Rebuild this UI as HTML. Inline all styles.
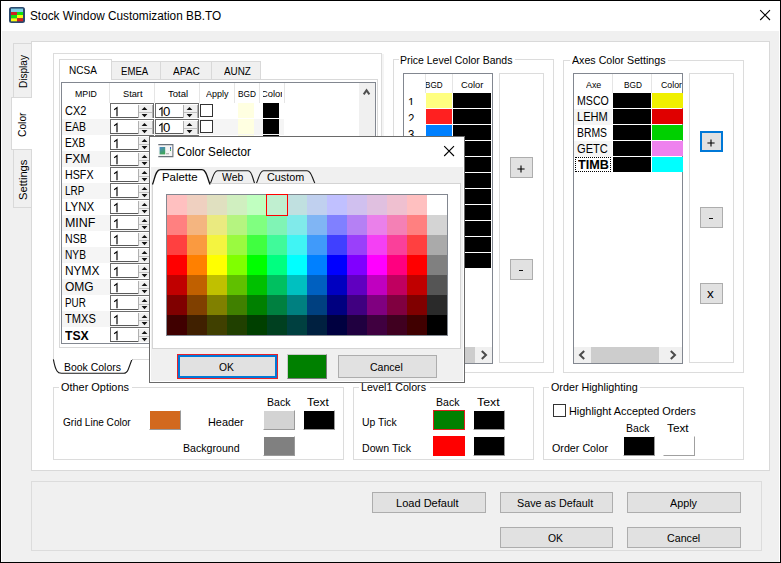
<!DOCTYPE html>
<html><head><meta charset="utf-8"><title>Stock Window Customization BB.TO</title>
<style>
html,body{margin:0;padding:0;}
body{width:781px;height:563px;overflow:hidden;background:#f0f0f0;font-family:"Liberation Sans", sans-serif;position:relative;}
#root{position:absolute;left:0;top:0;width:781px;height:563px;overflow:hidden;background:#f0f0f0;}
#root div{position:absolute;box-sizing:border-box;}
#root svg{position:absolute;overflow:visible;}
.t{position:absolute;white-space:nowrap;line-height:1;transform-origin:0 0;display:block;}
.btn{background:#e1e1e1;border:1px solid #adadad;}
.sw{border:1px solid;border-color:#fff #9a9a9a #9a9a9a #fff;}
</style></head>
<body><div id="root">
<div style="left:0px;top:0px;width:781px;height:563px;background:#f0f0f0;border:1px solid #000;"></div>
<div style="left:1px;top:1px;width:779px;height:30px;background:#fff;"></div>
<div style="left:1px;top:31px;width:1px;height:531px;background:#fff;"></div>
<div style="left:779px;top:31px;width:1px;height:531px;background:#fff;"></div>
<svg style="left:9px;top:7px" width="16" height="16" viewBox="0 0 16 16">
<rect x="0" y="0" width="16" height="16" rx="2.5" fill="#2c4a6e"/>
<rect x="2" y="1.6" width="12" height="3.4" fill="#7fcde6"/>
<rect x="2" y="5" width="6" height="3" fill="#d02020"/><rect x="8" y="5" width="6" height="3" fill="#10e010"/>
<rect x="2" y="8" width="6" height="3.3" fill="#10e010"/><rect x="8" y="8" width="6" height="3.3" fill="#f8f810"/>
<rect x="2" y="11.3" width="6" height="3" fill="#f8f810"/><rect x="8" y="11.3" width="6" height="3" fill="#d02020"/>
</svg>
<span class="t" style="left:29.91px;top:10px;font-size:12px;color:#000;transform:scaleX(0.9829);">Stock Window Customization BB.TO</span>
<svg style="left:760px;top:10px" width="11" height="11" viewBox="0 0 11 11"><path d="M0.2 0.2 L10 10 M10 0.2 L0.2 10" stroke="#000" stroke-width="1.1" fill="none"/></svg>
<div style="left:31px;top:41px;width:739px;height:430px;background:#fff;border:1px solid #d9d9d9;"></div>
<div style="left:13px;top:43px;width:19px;height:55px;background:#f0f0f0;border:1px solid #d9d9d9;"></div>
<div style="left:13px;top:149px;width:19px;height:59px;background:#f0f0f0;border:1px solid #d9d9d9;"></div>
<div style="left:11px;top:97px;width:21px;height:53px;background:#fff;border:1px solid #d9d9d9;border-right:none;"></div>
<span class="t" style="left:18px;top:87.9px;font-size:11px;transform-origin:0 0;transform:rotate(-90deg) scaleX(0.9143);">Display</span>
<span class="t" style="left:17px;top:136.5px;font-size:11px;transform-origin:0 0;transform:rotate(-90deg) scaleX(0.9320);">Color</span>
<span class="t" style="left:18px;top:199.8px;font-size:11px;transform-origin:0 0;transform:rotate(-90deg) scaleX(1.0168);">Settings</span>
<div style="left:53px;top:53px;width:329px;height:307px;border:1px solid #dcdcdc;"></div>
<div style="left:382px;top:54px;width:2px;height:306px;background:#f4f4f4;"></div>
<div style="left:111px;top:61px;width:150px;height:19px;background:#f0f0f0;border:1px solid #d9d9d9;"></div>
<div style="left:160px;top:61px;width:1px;height:19px;background:#d9d9d9;"></div>
<div style="left:211px;top:61px;width:1px;height:19px;background:#d9d9d9;"></div>
<div style="left:59px;top:79px;width:319px;height:269px;border:1px solid #d9d9d9;background:#fff;"></div>
<div style="left:59px;top:59px;width:53px;height:21px;background:#fff;border:1px solid #d9d9d9;border-bottom:none;"></div>
<span class="t" style="left:69.39px;top:65px;font-size:11px;color:#000;transform:scaleX(0.9119);">NCSA</span>
<span class="t" style="left:120.83px;top:66px;font-size:11px;color:#000;transform:scaleX(0.8733);">EMEA</span>
<span class="t" style="left:172.70px;top:66px;font-size:11px;color:#000;transform:scaleX(0.9217);">APAC</span>
<span class="t" style="left:223.50px;top:66px;font-size:11px;color:#000;transform:scaleX(0.8975);">AUNZ</span>
<div style="left:61px;top:82px;width:315px;height:262px;border:1px solid #828790;background:#fff;"></div>
<div style="left:109px;top:83px;width:1px;height:20px;background:#e5e5e5;"></div>
<div style="left:154px;top:83px;width:1px;height:20px;background:#e5e5e5;"></div>
<div style="left:199px;top:83px;width:1px;height:20px;background:#e5e5e5;"></div>
<div style="left:234px;top:83px;width:1px;height:20px;background:#e5e5e5;"></div>
<div style="left:259px;top:83px;width:1px;height:20px;background:#e5e5e5;"></div>
<div style="left:284px;top:83px;width:1px;height:20px;background:#e5e5e5;"></div>
<span class="t" style="left:74.62px;top:90px;font-size:9px;color:#000;transform:scaleX(0.9741);">MPID</span>
<span class="t" style="left:122.59px;top:90px;font-size:9px;color:#000;transform:scaleX(1.0270);">Start</span>
<span class="t" style="left:167.59px;top:90px;font-size:9px;color:#000;transform:scaleX(1.0575);">Total</span>
<span class="t" style="left:205.90px;top:90px;font-size:9px;color:#000;transform:scaleX(0.9956);">Apply</span>
<span class="t" style="left:238.41px;top:90px;font-size:9px;color:#000;transform:scaleX(0.9205);">BGD</span>
<div style="left:263px;top:85px;width:19px;height:16px;overflow:hidden;"><span class="t" style="left:-1.6px;top:5px;font-size:9px;transform:scaleX(1.0411)">Color</span></div>
<div style="left:359px;top:83px;width:16px;height:260px;background:#f0f0f0;"></div>
<svg style="left:362px;top:87px" width="10" height="10" viewBox="0 0 10 10"><path d="M1.7 7.3 L4.55 3.3 L7.4 7.3" stroke="#505050" stroke-width="2" fill="none"/></svg>
<span class="t" style="left:65.14px;top:105px;font-size:12px;color:#000;transform:scaleX(0.9124);">CX2</span>
<div style="left:110px;top:103px;width:44px;height:15px;background:#fff;border:1px solid #6d6d6d;border-bottom:none;"></div>
<div style="left:110px;top:117px;width:28px;height:1px;background:#5a5a5a;"></div>
<div style="left:138px;top:105px;width:15px;height:13px;background:#f0f0f0;border-left:1px solid #b0b0b0;border-right:1px solid #b0b0b0;"></div>
<div style="left:139px;top:112px;width:13px;height:1px;background:#c0c0c0;"></div>
<svg style="left:141px;top:106px" width="7" height="12" viewBox="0 0 7 12"><path d="M0.6 4.1 L3.5 0.9 L6.4 4.1 Z M0.6 8 L6.4 8 L3.5 11.2 Z" fill="#111"/></svg>
<svg style="left:113.6px;top:106.8px" width="5" height="10" viewBox="0 0 5 10"><path d="M0.2 2.7 L3 0.6 L3 9.2" stroke="#000" stroke-width="1.15" fill="none"/></svg>
<div style="left:155px;top:103px;width:44px;height:15px;background:#fff;border:1px solid #6d6d6d;border-bottom:none;"></div>
<div style="left:155px;top:117px;width:28px;height:1px;background:#5a5a5a;"></div>
<div style="left:183px;top:105px;width:15px;height:13px;background:#f0f0f0;border-left:1px solid #b0b0b0;border-right:1px solid #b0b0b0;"></div>
<div style="left:184px;top:112px;width:13px;height:1px;background:#c0c0c0;"></div>
<svg style="left:186px;top:106px" width="7" height="12" viewBox="0 0 7 12"><path d="M0.6 4.1 L3.5 0.9 L6.4 4.1 Z M0.6 8 L6.4 8 L3.5 11.2 Z" fill="#111"/></svg>
<svg style="left:158.6px;top:106.8px" width="5" height="10" viewBox="0 0 5 10"><path d="M0.2 2.7 L3 0.6 L3 9.2" stroke="#000" stroke-width="1.15" fill="none"/></svg>
<span class="t" style="left:163.25px;top:106px;font-size:12px;color:#000;transform:scaleX(1.0957);">0</span>
<div style="left:200px;top:104px;width:13px;height:13px;background:#fff;border:1px solid #333;"></div>
<div style="left:238px;top:103px;width:16px;height:15px;background:#ffffe1;"></div>
<div style="left:263px;top:103px;width:16px;height:15px;background:#000;"></div>
<div style="left:62px;top:119px;width:222px;height:16px;background:#f5f5f5;"></div>
<span class="t" style="left:64.73px;top:121px;font-size:12px;color:#000;transform:scaleX(0.8711);">EAB</span>
<div style="left:110px;top:119px;width:44px;height:15px;background:#fff;border:1px solid #6d6d6d;border-bottom:none;"></div>
<div style="left:110px;top:133px;width:28px;height:1px;background:#5a5a5a;"></div>
<div style="left:138px;top:121px;width:15px;height:13px;background:#f0f0f0;border-left:1px solid #b0b0b0;border-right:1px solid #b0b0b0;"></div>
<div style="left:139px;top:128px;width:13px;height:1px;background:#c0c0c0;"></div>
<svg style="left:141px;top:122px" width="7" height="12" viewBox="0 0 7 12"><path d="M0.6 4.1 L3.5 0.9 L6.4 4.1 Z M0.6 8 L6.4 8 L3.5 11.2 Z" fill="#111"/></svg>
<svg style="left:113.6px;top:122.8px" width="5" height="10" viewBox="0 0 5 10"><path d="M0.2 2.7 L3 0.6 L3 9.2" stroke="#000" stroke-width="1.15" fill="none"/></svg>
<div style="left:155px;top:119px;width:44px;height:15px;background:#fff;border:1px solid #6d6d6d;border-bottom:none;"></div>
<div style="left:155px;top:133px;width:28px;height:1px;background:#5a5a5a;"></div>
<div style="left:183px;top:121px;width:15px;height:13px;background:#f0f0f0;border-left:1px solid #b0b0b0;border-right:1px solid #b0b0b0;"></div>
<div style="left:184px;top:128px;width:13px;height:1px;background:#c0c0c0;"></div>
<svg style="left:186px;top:122px" width="7" height="12" viewBox="0 0 7 12"><path d="M0.6 4.1 L3.5 0.9 L6.4 4.1 Z M0.6 8 L6.4 8 L3.5 11.2 Z" fill="#111"/></svg>
<svg style="left:158.6px;top:122.8px" width="5" height="10" viewBox="0 0 5 10"><path d="M0.2 2.7 L3 0.6 L3 9.2" stroke="#000" stroke-width="1.15" fill="none"/></svg>
<span class="t" style="left:163.25px;top:122px;font-size:12px;color:#000;transform:scaleX(1.0957);">0</span>
<div style="left:200px;top:120px;width:13px;height:13px;background:#fff;border:1px solid #333;"></div>
<div style="left:238px;top:119px;width:16px;height:15px;background:#ffffe1;"></div>
<div style="left:263px;top:119px;width:16px;height:15px;background:#000;"></div>
<span class="t" style="left:64.76px;top:137px;font-size:12px;color:#000;transform:scaleX(0.8444);">EXB</span>
<div style="left:110px;top:135px;width:44px;height:15px;background:#fff;border:1px solid #6d6d6d;border-bottom:none;"></div>
<div style="left:110px;top:149px;width:28px;height:1px;background:#5a5a5a;"></div>
<div style="left:138px;top:137px;width:15px;height:13px;background:#f0f0f0;border-left:1px solid #b0b0b0;border-right:1px solid #b0b0b0;"></div>
<div style="left:139px;top:144px;width:13px;height:1px;background:#c0c0c0;"></div>
<svg style="left:141px;top:138px" width="7" height="12" viewBox="0 0 7 12"><path d="M0.6 4.1 L3.5 0.9 L6.4 4.1 Z M0.6 8 L6.4 8 L3.5 11.2 Z" fill="#111"/></svg>
<svg style="left:113.6px;top:138.8px" width="5" height="10" viewBox="0 0 5 10"><path d="M0.2 2.7 L3 0.6 L3 9.2" stroke="#000" stroke-width="1.15" fill="none"/></svg>
<div style="left:155px;top:135px;width:44px;height:15px;background:#fff;border:1px solid #6d6d6d;border-bottom:none;"></div>
<div style="left:155px;top:149px;width:28px;height:1px;background:#5a5a5a;"></div>
<div style="left:183px;top:137px;width:15px;height:13px;background:#f0f0f0;border-left:1px solid #b0b0b0;border-right:1px solid #b0b0b0;"></div>
<div style="left:184px;top:144px;width:13px;height:1px;background:#c0c0c0;"></div>
<svg style="left:186px;top:138px" width="7" height="12" viewBox="0 0 7 12"><path d="M0.6 4.1 L3.5 0.9 L6.4 4.1 Z M0.6 8 L6.4 8 L3.5 11.2 Z" fill="#111"/></svg>
<svg style="left:158.6px;top:138.8px" width="5" height="10" viewBox="0 0 5 10"><path d="M0.2 2.7 L3 0.6 L3 9.2" stroke="#000" stroke-width="1.15" fill="none"/></svg>
<span class="t" style="left:163.25px;top:138px;font-size:12px;color:#000;transform:scaleX(1.0957);">0</span>
<div style="left:200px;top:136px;width:13px;height:13px;background:#fff;border:1px solid #333;"></div>
<div style="left:238px;top:135px;width:16px;height:15px;background:#ffffe1;"></div>
<div style="left:263px;top:135px;width:16px;height:15px;background:#000;"></div>
<div style="left:62px;top:151px;width:222px;height:16px;background:#f5f5f5;"></div>
<span class="t" style="left:64.60px;top:153px;font-size:12px;color:#000;transform:scaleX(1.0022);">FXM</span>
<div style="left:110px;top:151px;width:44px;height:15px;background:#fff;border:1px solid #6d6d6d;border-bottom:none;"></div>
<div style="left:110px;top:165px;width:28px;height:1px;background:#5a5a5a;"></div>
<div style="left:138px;top:153px;width:15px;height:13px;background:#f0f0f0;border-left:1px solid #b0b0b0;border-right:1px solid #b0b0b0;"></div>
<div style="left:139px;top:160px;width:13px;height:1px;background:#c0c0c0;"></div>
<svg style="left:141px;top:154px" width="7" height="12" viewBox="0 0 7 12"><path d="M0.6 4.1 L3.5 0.9 L6.4 4.1 Z M0.6 8 L6.4 8 L3.5 11.2 Z" fill="#111"/></svg>
<svg style="left:113.6px;top:154.8px" width="5" height="10" viewBox="0 0 5 10"><path d="M0.2 2.7 L3 0.6 L3 9.2" stroke="#000" stroke-width="1.15" fill="none"/></svg>
<div style="left:155px;top:151px;width:44px;height:15px;background:#fff;border:1px solid #6d6d6d;border-bottom:none;"></div>
<div style="left:155px;top:165px;width:28px;height:1px;background:#5a5a5a;"></div>
<div style="left:183px;top:153px;width:15px;height:13px;background:#f0f0f0;border-left:1px solid #b0b0b0;border-right:1px solid #b0b0b0;"></div>
<div style="left:184px;top:160px;width:13px;height:1px;background:#c0c0c0;"></div>
<svg style="left:186px;top:154px" width="7" height="12" viewBox="0 0 7 12"><path d="M0.6 4.1 L3.5 0.9 L6.4 4.1 Z M0.6 8 L6.4 8 L3.5 11.2 Z" fill="#111"/></svg>
<svg style="left:158.6px;top:154.8px" width="5" height="10" viewBox="0 0 5 10"><path d="M0.2 2.7 L3 0.6 L3 9.2" stroke="#000" stroke-width="1.15" fill="none"/></svg>
<span class="t" style="left:163.25px;top:154px;font-size:12px;color:#000;transform:scaleX(1.0957);">0</span>
<div style="left:200px;top:152px;width:13px;height:13px;background:#fff;border:1px solid #333;"></div>
<div style="left:238px;top:151px;width:16px;height:15px;background:#ffffe1;"></div>
<div style="left:263px;top:151px;width:16px;height:15px;background:#000;"></div>
<span class="t" style="left:64.71px;top:169px;font-size:12px;color:#000;transform:scaleX(0.8911);">HSFX</span>
<div style="left:110px;top:167px;width:44px;height:15px;background:#fff;border:1px solid #6d6d6d;border-bottom:none;"></div>
<div style="left:110px;top:181px;width:28px;height:1px;background:#5a5a5a;"></div>
<div style="left:138px;top:169px;width:15px;height:13px;background:#f0f0f0;border-left:1px solid #b0b0b0;border-right:1px solid #b0b0b0;"></div>
<div style="left:139px;top:176px;width:13px;height:1px;background:#c0c0c0;"></div>
<svg style="left:141px;top:170px" width="7" height="12" viewBox="0 0 7 12"><path d="M0.6 4.1 L3.5 0.9 L6.4 4.1 Z M0.6 8 L6.4 8 L3.5 11.2 Z" fill="#111"/></svg>
<svg style="left:113.6px;top:170.8px" width="5" height="10" viewBox="0 0 5 10"><path d="M0.2 2.7 L3 0.6 L3 9.2" stroke="#000" stroke-width="1.15" fill="none"/></svg>
<div style="left:155px;top:167px;width:44px;height:15px;background:#fff;border:1px solid #6d6d6d;border-bottom:none;"></div>
<div style="left:155px;top:181px;width:28px;height:1px;background:#5a5a5a;"></div>
<div style="left:183px;top:169px;width:15px;height:13px;background:#f0f0f0;border-left:1px solid #b0b0b0;border-right:1px solid #b0b0b0;"></div>
<div style="left:184px;top:176px;width:13px;height:1px;background:#c0c0c0;"></div>
<svg style="left:186px;top:170px" width="7" height="12" viewBox="0 0 7 12"><path d="M0.6 4.1 L3.5 0.9 L6.4 4.1 Z M0.6 8 L6.4 8 L3.5 11.2 Z" fill="#111"/></svg>
<svg style="left:158.6px;top:170.8px" width="5" height="10" viewBox="0 0 5 10"><path d="M0.2 2.7 L3 0.6 L3 9.2" stroke="#000" stroke-width="1.15" fill="none"/></svg>
<span class="t" style="left:163.25px;top:170px;font-size:12px;color:#000;transform:scaleX(1.0957);">0</span>
<div style="left:200px;top:168px;width:13px;height:13px;background:#fff;border:1px solid #333;"></div>
<div style="left:238px;top:167px;width:16px;height:15px;background:#ffffe1;"></div>
<div style="left:263px;top:167px;width:16px;height:15px;background:#000;"></div>
<div style="left:62px;top:183px;width:222px;height:16px;background:#f5f5f5;"></div>
<span class="t" style="left:64.77px;top:185px;font-size:12px;color:#000;transform:scaleX(0.8276);">LRP</span>
<div style="left:110px;top:183px;width:44px;height:15px;background:#fff;border:1px solid #6d6d6d;border-bottom:none;"></div>
<div style="left:110px;top:197px;width:28px;height:1px;background:#5a5a5a;"></div>
<div style="left:138px;top:185px;width:15px;height:13px;background:#f0f0f0;border-left:1px solid #b0b0b0;border-right:1px solid #b0b0b0;"></div>
<div style="left:139px;top:192px;width:13px;height:1px;background:#c0c0c0;"></div>
<svg style="left:141px;top:186px" width="7" height="12" viewBox="0 0 7 12"><path d="M0.6 4.1 L3.5 0.9 L6.4 4.1 Z M0.6 8 L6.4 8 L3.5 11.2 Z" fill="#111"/></svg>
<svg style="left:113.6px;top:186.8px" width="5" height="10" viewBox="0 0 5 10"><path d="M0.2 2.7 L3 0.6 L3 9.2" stroke="#000" stroke-width="1.15" fill="none"/></svg>
<div style="left:155px;top:183px;width:44px;height:15px;background:#fff;border:1px solid #6d6d6d;border-bottom:none;"></div>
<div style="left:155px;top:197px;width:28px;height:1px;background:#5a5a5a;"></div>
<div style="left:183px;top:185px;width:15px;height:13px;background:#f0f0f0;border-left:1px solid #b0b0b0;border-right:1px solid #b0b0b0;"></div>
<div style="left:184px;top:192px;width:13px;height:1px;background:#c0c0c0;"></div>
<svg style="left:186px;top:186px" width="7" height="12" viewBox="0 0 7 12"><path d="M0.6 4.1 L3.5 0.9 L6.4 4.1 Z M0.6 8 L6.4 8 L3.5 11.2 Z" fill="#111"/></svg>
<svg style="left:158.6px;top:186.8px" width="5" height="10" viewBox="0 0 5 10"><path d="M0.2 2.7 L3 0.6 L3 9.2" stroke="#000" stroke-width="1.15" fill="none"/></svg>
<span class="t" style="left:163.25px;top:186px;font-size:12px;color:#000;transform:scaleX(1.0957);">0</span>
<div style="left:200px;top:184px;width:13px;height:13px;background:#fff;border:1px solid #333;"></div>
<div style="left:238px;top:183px;width:16px;height:15px;background:#ffffe1;"></div>
<div style="left:263px;top:183px;width:16px;height:15px;background:#000;"></div>
<span class="t" style="left:64.64px;top:201px;font-size:12px;color:#000;transform:scaleX(0.9586);">LYNX</span>
<div style="left:110px;top:199px;width:44px;height:15px;background:#fff;border:1px solid #6d6d6d;border-bottom:none;"></div>
<div style="left:110px;top:213px;width:28px;height:1px;background:#5a5a5a;"></div>
<div style="left:138px;top:201px;width:15px;height:13px;background:#f0f0f0;border-left:1px solid #b0b0b0;border-right:1px solid #b0b0b0;"></div>
<div style="left:139px;top:208px;width:13px;height:1px;background:#c0c0c0;"></div>
<svg style="left:141px;top:202px" width="7" height="12" viewBox="0 0 7 12"><path d="M0.6 4.1 L3.5 0.9 L6.4 4.1 Z M0.6 8 L6.4 8 L3.5 11.2 Z" fill="#111"/></svg>
<svg style="left:113.6px;top:202.8px" width="5" height="10" viewBox="0 0 5 10"><path d="M0.2 2.7 L3 0.6 L3 9.2" stroke="#000" stroke-width="1.15" fill="none"/></svg>
<div style="left:155px;top:199px;width:44px;height:15px;background:#fff;border:1px solid #6d6d6d;border-bottom:none;"></div>
<div style="left:155px;top:213px;width:28px;height:1px;background:#5a5a5a;"></div>
<div style="left:183px;top:201px;width:15px;height:13px;background:#f0f0f0;border-left:1px solid #b0b0b0;border-right:1px solid #b0b0b0;"></div>
<div style="left:184px;top:208px;width:13px;height:1px;background:#c0c0c0;"></div>
<svg style="left:186px;top:202px" width="7" height="12" viewBox="0 0 7 12"><path d="M0.6 4.1 L3.5 0.9 L6.4 4.1 Z M0.6 8 L6.4 8 L3.5 11.2 Z" fill="#111"/></svg>
<svg style="left:158.6px;top:202.8px" width="5" height="10" viewBox="0 0 5 10"><path d="M0.2 2.7 L3 0.6 L3 9.2" stroke="#000" stroke-width="1.15" fill="none"/></svg>
<span class="t" style="left:163.25px;top:202px;font-size:12px;color:#000;transform:scaleX(1.0957);">0</span>
<div style="left:200px;top:200px;width:13px;height:13px;background:#fff;border:1px solid #333;"></div>
<div style="left:238px;top:199px;width:16px;height:15px;background:#ffffe1;"></div>
<div style="left:263px;top:199px;width:16px;height:15px;background:#000;"></div>
<div style="left:62px;top:215px;width:222px;height:16px;background:#f5f5f5;"></div>
<span class="t" style="left:64.56px;top:217px;font-size:12px;color:#000;transform:scaleX(1.0378);">MINF</span>
<div style="left:110px;top:215px;width:44px;height:15px;background:#fff;border:1px solid #6d6d6d;border-bottom:none;"></div>
<div style="left:110px;top:229px;width:28px;height:1px;background:#5a5a5a;"></div>
<div style="left:138px;top:217px;width:15px;height:13px;background:#f0f0f0;border-left:1px solid #b0b0b0;border-right:1px solid #b0b0b0;"></div>
<div style="left:139px;top:224px;width:13px;height:1px;background:#c0c0c0;"></div>
<svg style="left:141px;top:218px" width="7" height="12" viewBox="0 0 7 12"><path d="M0.6 4.1 L3.5 0.9 L6.4 4.1 Z M0.6 8 L6.4 8 L3.5 11.2 Z" fill="#111"/></svg>
<svg style="left:113.6px;top:218.8px" width="5" height="10" viewBox="0 0 5 10"><path d="M0.2 2.7 L3 0.6 L3 9.2" stroke="#000" stroke-width="1.15" fill="none"/></svg>
<div style="left:155px;top:215px;width:44px;height:15px;background:#fff;border:1px solid #6d6d6d;border-bottom:none;"></div>
<div style="left:155px;top:229px;width:28px;height:1px;background:#5a5a5a;"></div>
<div style="left:183px;top:217px;width:15px;height:13px;background:#f0f0f0;border-left:1px solid #b0b0b0;border-right:1px solid #b0b0b0;"></div>
<div style="left:184px;top:224px;width:13px;height:1px;background:#c0c0c0;"></div>
<svg style="left:186px;top:218px" width="7" height="12" viewBox="0 0 7 12"><path d="M0.6 4.1 L3.5 0.9 L6.4 4.1 Z M0.6 8 L6.4 8 L3.5 11.2 Z" fill="#111"/></svg>
<svg style="left:158.6px;top:218.8px" width="5" height="10" viewBox="0 0 5 10"><path d="M0.2 2.7 L3 0.6 L3 9.2" stroke="#000" stroke-width="1.15" fill="none"/></svg>
<span class="t" style="left:163.25px;top:218px;font-size:12px;color:#000;transform:scaleX(1.0957);">0</span>
<div style="left:200px;top:216px;width:13px;height:13px;background:#fff;border:1px solid #333;"></div>
<div style="left:238px;top:215px;width:16px;height:15px;background:#ffffe1;"></div>
<div style="left:263px;top:215px;width:16px;height:15px;background:#000;"></div>
<span class="t" style="left:64.72px;top:233px;font-size:12px;color:#000;transform:scaleX(0.8826);">NSB</span>
<div style="left:110px;top:231px;width:44px;height:15px;background:#fff;border:1px solid #6d6d6d;border-bottom:none;"></div>
<div style="left:110px;top:245px;width:28px;height:1px;background:#5a5a5a;"></div>
<div style="left:138px;top:233px;width:15px;height:13px;background:#f0f0f0;border-left:1px solid #b0b0b0;border-right:1px solid #b0b0b0;"></div>
<div style="left:139px;top:240px;width:13px;height:1px;background:#c0c0c0;"></div>
<svg style="left:141px;top:234px" width="7" height="12" viewBox="0 0 7 12"><path d="M0.6 4.1 L3.5 0.9 L6.4 4.1 Z M0.6 8 L6.4 8 L3.5 11.2 Z" fill="#111"/></svg>
<svg style="left:113.6px;top:234.8px" width="5" height="10" viewBox="0 0 5 10"><path d="M0.2 2.7 L3 0.6 L3 9.2" stroke="#000" stroke-width="1.15" fill="none"/></svg>
<div style="left:155px;top:231px;width:44px;height:15px;background:#fff;border:1px solid #6d6d6d;border-bottom:none;"></div>
<div style="left:155px;top:245px;width:28px;height:1px;background:#5a5a5a;"></div>
<div style="left:183px;top:233px;width:15px;height:13px;background:#f0f0f0;border-left:1px solid #b0b0b0;border-right:1px solid #b0b0b0;"></div>
<div style="left:184px;top:240px;width:13px;height:1px;background:#c0c0c0;"></div>
<svg style="left:186px;top:234px" width="7" height="12" viewBox="0 0 7 12"><path d="M0.6 4.1 L3.5 0.9 L6.4 4.1 Z M0.6 8 L6.4 8 L3.5 11.2 Z" fill="#111"/></svg>
<svg style="left:158.6px;top:234.8px" width="5" height="10" viewBox="0 0 5 10"><path d="M0.2 2.7 L3 0.6 L3 9.2" stroke="#000" stroke-width="1.15" fill="none"/></svg>
<span class="t" style="left:163.25px;top:234px;font-size:12px;color:#000;transform:scaleX(1.0957);">0</span>
<div style="left:200px;top:232px;width:13px;height:13px;background:#fff;border:1px solid #333;"></div>
<div style="left:238px;top:231px;width:16px;height:15px;background:#ffffe1;"></div>
<div style="left:263px;top:231px;width:16px;height:15px;background:#000;"></div>
<div style="left:62px;top:247px;width:222px;height:16px;background:#f5f5f5;"></div>
<span class="t" style="left:64.75px;top:249px;font-size:12px;color:#000;transform:scaleX(0.8478);">NYB</span>
<div style="left:110px;top:247px;width:44px;height:15px;background:#fff;border:1px solid #6d6d6d;border-bottom:none;"></div>
<div style="left:110px;top:261px;width:28px;height:1px;background:#5a5a5a;"></div>
<div style="left:138px;top:249px;width:15px;height:13px;background:#f0f0f0;border-left:1px solid #b0b0b0;border-right:1px solid #b0b0b0;"></div>
<div style="left:139px;top:256px;width:13px;height:1px;background:#c0c0c0;"></div>
<svg style="left:141px;top:250px" width="7" height="12" viewBox="0 0 7 12"><path d="M0.6 4.1 L3.5 0.9 L6.4 4.1 Z M0.6 8 L6.4 8 L3.5 11.2 Z" fill="#111"/></svg>
<svg style="left:113.6px;top:250.8px" width="5" height="10" viewBox="0 0 5 10"><path d="M0.2 2.7 L3 0.6 L3 9.2" stroke="#000" stroke-width="1.15" fill="none"/></svg>
<div style="left:155px;top:247px;width:44px;height:15px;background:#fff;border:1px solid #6d6d6d;border-bottom:none;"></div>
<div style="left:155px;top:261px;width:28px;height:1px;background:#5a5a5a;"></div>
<div style="left:183px;top:249px;width:15px;height:13px;background:#f0f0f0;border-left:1px solid #b0b0b0;border-right:1px solid #b0b0b0;"></div>
<div style="left:184px;top:256px;width:13px;height:1px;background:#c0c0c0;"></div>
<svg style="left:186px;top:250px" width="7" height="12" viewBox="0 0 7 12"><path d="M0.6 4.1 L3.5 0.9 L6.4 4.1 Z M0.6 8 L6.4 8 L3.5 11.2 Z" fill="#111"/></svg>
<svg style="left:158.6px;top:250.8px" width="5" height="10" viewBox="0 0 5 10"><path d="M0.2 2.7 L3 0.6 L3 9.2" stroke="#000" stroke-width="1.15" fill="none"/></svg>
<span class="t" style="left:163.25px;top:250px;font-size:12px;color:#000;transform:scaleX(1.0957);">0</span>
<div style="left:200px;top:248px;width:13px;height:13px;background:#fff;border:1px solid #333;"></div>
<div style="left:238px;top:247px;width:16px;height:15px;background:#ffffe1;"></div>
<div style="left:263px;top:247px;width:16px;height:15px;background:#000;"></div>
<span class="t" style="left:64.61px;top:265px;font-size:12px;color:#000;transform:scaleX(0.9925);">NYMX</span>
<div style="left:110px;top:263px;width:44px;height:15px;background:#fff;border:1px solid #6d6d6d;border-bottom:none;"></div>
<div style="left:110px;top:277px;width:28px;height:1px;background:#5a5a5a;"></div>
<div style="left:138px;top:265px;width:15px;height:13px;background:#f0f0f0;border-left:1px solid #b0b0b0;border-right:1px solid #b0b0b0;"></div>
<div style="left:139px;top:272px;width:13px;height:1px;background:#c0c0c0;"></div>
<svg style="left:141px;top:266px" width="7" height="12" viewBox="0 0 7 12"><path d="M0.6 4.1 L3.5 0.9 L6.4 4.1 Z M0.6 8 L6.4 8 L3.5 11.2 Z" fill="#111"/></svg>
<svg style="left:113.6px;top:266.8px" width="5" height="10" viewBox="0 0 5 10"><path d="M0.2 2.7 L3 0.6 L3 9.2" stroke="#000" stroke-width="1.15" fill="none"/></svg>
<div style="left:155px;top:263px;width:44px;height:15px;background:#fff;border:1px solid #6d6d6d;border-bottom:none;"></div>
<div style="left:155px;top:277px;width:28px;height:1px;background:#5a5a5a;"></div>
<div style="left:183px;top:265px;width:15px;height:13px;background:#f0f0f0;border-left:1px solid #b0b0b0;border-right:1px solid #b0b0b0;"></div>
<div style="left:184px;top:272px;width:13px;height:1px;background:#c0c0c0;"></div>
<svg style="left:186px;top:266px" width="7" height="12" viewBox="0 0 7 12"><path d="M0.6 4.1 L3.5 0.9 L6.4 4.1 Z M0.6 8 L6.4 8 L3.5 11.2 Z" fill="#111"/></svg>
<svg style="left:158.6px;top:266.8px" width="5" height="10" viewBox="0 0 5 10"><path d="M0.2 2.7 L3 0.6 L3 9.2" stroke="#000" stroke-width="1.15" fill="none"/></svg>
<span class="t" style="left:163.25px;top:266px;font-size:12px;color:#000;transform:scaleX(1.0957);">0</span>
<div style="left:200px;top:264px;width:13px;height:13px;background:#fff;border:1px solid #333;"></div>
<div style="left:238px;top:263px;width:16px;height:15px;background:#ffffe1;"></div>
<div style="left:263px;top:263px;width:16px;height:15px;background:#000;"></div>
<div style="left:62px;top:279px;width:222px;height:16px;background:#f5f5f5;"></div>
<span class="t" style="left:65.10px;top:281px;font-size:12px;color:#000;transform:scaleX(0.9982);">OMG</span>
<div style="left:110px;top:279px;width:44px;height:15px;background:#fff;border:1px solid #6d6d6d;border-bottom:none;"></div>
<div style="left:110px;top:293px;width:28px;height:1px;background:#5a5a5a;"></div>
<div style="left:138px;top:281px;width:15px;height:13px;background:#f0f0f0;border-left:1px solid #b0b0b0;border-right:1px solid #b0b0b0;"></div>
<div style="left:139px;top:288px;width:13px;height:1px;background:#c0c0c0;"></div>
<svg style="left:141px;top:282px" width="7" height="12" viewBox="0 0 7 12"><path d="M0.6 4.1 L3.5 0.9 L6.4 4.1 Z M0.6 8 L6.4 8 L3.5 11.2 Z" fill="#111"/></svg>
<svg style="left:113.6px;top:282.8px" width="5" height="10" viewBox="0 0 5 10"><path d="M0.2 2.7 L3 0.6 L3 9.2" stroke="#000" stroke-width="1.15" fill="none"/></svg>
<div style="left:155px;top:279px;width:44px;height:15px;background:#fff;border:1px solid #6d6d6d;border-bottom:none;"></div>
<div style="left:155px;top:293px;width:28px;height:1px;background:#5a5a5a;"></div>
<div style="left:183px;top:281px;width:15px;height:13px;background:#f0f0f0;border-left:1px solid #b0b0b0;border-right:1px solid #b0b0b0;"></div>
<div style="left:184px;top:288px;width:13px;height:1px;background:#c0c0c0;"></div>
<svg style="left:186px;top:282px" width="7" height="12" viewBox="0 0 7 12"><path d="M0.6 4.1 L3.5 0.9 L6.4 4.1 Z M0.6 8 L6.4 8 L3.5 11.2 Z" fill="#111"/></svg>
<svg style="left:158.6px;top:282.8px" width="5" height="10" viewBox="0 0 5 10"><path d="M0.2 2.7 L3 0.6 L3 9.2" stroke="#000" stroke-width="1.15" fill="none"/></svg>
<span class="t" style="left:163.25px;top:282px;font-size:12px;color:#000;transform:scaleX(1.0957);">0</span>
<div style="left:200px;top:280px;width:13px;height:13px;background:#fff;border:1px solid #333;"></div>
<div style="left:238px;top:279px;width:16px;height:15px;background:#ffffe1;"></div>
<div style="left:263px;top:279px;width:16px;height:15px;background:#000;"></div>
<span class="t" style="left:64.78px;top:297px;font-size:12px;color:#000;transform:scaleX(0.8211);">PUR</span>
<div style="left:110px;top:295px;width:44px;height:15px;background:#fff;border:1px solid #6d6d6d;border-bottom:none;"></div>
<div style="left:110px;top:309px;width:28px;height:1px;background:#5a5a5a;"></div>
<div style="left:138px;top:297px;width:15px;height:13px;background:#f0f0f0;border-left:1px solid #b0b0b0;border-right:1px solid #b0b0b0;"></div>
<div style="left:139px;top:304px;width:13px;height:1px;background:#c0c0c0;"></div>
<svg style="left:141px;top:298px" width="7" height="12" viewBox="0 0 7 12"><path d="M0.6 4.1 L3.5 0.9 L6.4 4.1 Z M0.6 8 L6.4 8 L3.5 11.2 Z" fill="#111"/></svg>
<svg style="left:113.6px;top:298.8px" width="5" height="10" viewBox="0 0 5 10"><path d="M0.2 2.7 L3 0.6 L3 9.2" stroke="#000" stroke-width="1.15" fill="none"/></svg>
<div style="left:155px;top:295px;width:44px;height:15px;background:#fff;border:1px solid #6d6d6d;border-bottom:none;"></div>
<div style="left:155px;top:309px;width:28px;height:1px;background:#5a5a5a;"></div>
<div style="left:183px;top:297px;width:15px;height:13px;background:#f0f0f0;border-left:1px solid #b0b0b0;border-right:1px solid #b0b0b0;"></div>
<div style="left:184px;top:304px;width:13px;height:1px;background:#c0c0c0;"></div>
<svg style="left:186px;top:298px" width="7" height="12" viewBox="0 0 7 12"><path d="M0.6 4.1 L3.5 0.9 L6.4 4.1 Z M0.6 8 L6.4 8 L3.5 11.2 Z" fill="#111"/></svg>
<svg style="left:158.6px;top:298.8px" width="5" height="10" viewBox="0 0 5 10"><path d="M0.2 2.7 L3 0.6 L3 9.2" stroke="#000" stroke-width="1.15" fill="none"/></svg>
<span class="t" style="left:163.25px;top:298px;font-size:12px;color:#000;transform:scaleX(1.0957);">0</span>
<div style="left:200px;top:296px;width:13px;height:13px;background:#fff;border:1px solid #333;"></div>
<div style="left:238px;top:295px;width:16px;height:15px;background:#ffffe1;"></div>
<div style="left:263px;top:295px;width:16px;height:15px;background:#000;"></div>
<div style="left:62px;top:311px;width:222px;height:16px;background:#f5f5f5;"></div>
<span class="t" style="left:65.37px;top:313px;font-size:12px;color:#000;transform:scaleX(0.9231);">TMXS</span>
<div style="left:110px;top:311px;width:44px;height:15px;background:#fff;border:1px solid #6d6d6d;border-bottom:none;"></div>
<div style="left:110px;top:325px;width:28px;height:1px;background:#5a5a5a;"></div>
<div style="left:138px;top:313px;width:15px;height:13px;background:#f0f0f0;border-left:1px solid #b0b0b0;border-right:1px solid #b0b0b0;"></div>
<div style="left:139px;top:320px;width:13px;height:1px;background:#c0c0c0;"></div>
<svg style="left:141px;top:314px" width="7" height="12" viewBox="0 0 7 12"><path d="M0.6 4.1 L3.5 0.9 L6.4 4.1 Z M0.6 8 L6.4 8 L3.5 11.2 Z" fill="#111"/></svg>
<svg style="left:113.6px;top:314.8px" width="5" height="10" viewBox="0 0 5 10"><path d="M0.2 2.7 L3 0.6 L3 9.2" stroke="#000" stroke-width="1.15" fill="none"/></svg>
<div style="left:155px;top:311px;width:44px;height:15px;background:#fff;border:1px solid #6d6d6d;border-bottom:none;"></div>
<div style="left:155px;top:325px;width:28px;height:1px;background:#5a5a5a;"></div>
<div style="left:183px;top:313px;width:15px;height:13px;background:#f0f0f0;border-left:1px solid #b0b0b0;border-right:1px solid #b0b0b0;"></div>
<div style="left:184px;top:320px;width:13px;height:1px;background:#c0c0c0;"></div>
<svg style="left:186px;top:314px" width="7" height="12" viewBox="0 0 7 12"><path d="M0.6 4.1 L3.5 0.9 L6.4 4.1 Z M0.6 8 L6.4 8 L3.5 11.2 Z" fill="#111"/></svg>
<svg style="left:158.6px;top:314.8px" width="5" height="10" viewBox="0 0 5 10"><path d="M0.2 2.7 L3 0.6 L3 9.2" stroke="#000" stroke-width="1.15" fill="none"/></svg>
<span class="t" style="left:163.25px;top:314px;font-size:12px;color:#000;transform:scaleX(1.0957);">0</span>
<div style="left:200px;top:312px;width:13px;height:13px;background:#fff;border:1px solid #333;"></div>
<div style="left:238px;top:311px;width:16px;height:15px;background:#ffffe1;"></div>
<div style="left:263px;top:311px;width:16px;height:15px;background:#000;"></div>
<span class="t" style="left:65.45px;top:330px;font-size:12px;font-weight:bold;color:#000;transform:scaleX(1.0174);">TSX</span>
<div style="left:110px;top:327px;width:44px;height:15px;background:#fff;border:1px solid #6d6d6d;border-bottom:none;"></div>
<div style="left:110px;top:341px;width:28px;height:1px;background:#5a5a5a;"></div>
<div style="left:138px;top:329px;width:15px;height:13px;background:#f0f0f0;border-left:1px solid #b0b0b0;border-right:1px solid #b0b0b0;"></div>
<div style="left:139px;top:336px;width:13px;height:1px;background:#c0c0c0;"></div>
<svg style="left:141px;top:330px" width="7" height="12" viewBox="0 0 7 12"><path d="M0.6 4.1 L3.5 0.9 L6.4 4.1 Z M0.6 8 L6.4 8 L3.5 11.2 Z" fill="#111"/></svg>
<svg style="left:113.6px;top:330.8px" width="5" height="10" viewBox="0 0 5 10"><path d="M0.2 2.7 L3 0.6 L3 9.2" stroke="#000" stroke-width="1.15" fill="none"/></svg>
<div style="left:155px;top:327px;width:44px;height:15px;background:#fff;border:1px solid #6d6d6d;border-bottom:none;"></div>
<div style="left:155px;top:341px;width:28px;height:1px;background:#5a5a5a;"></div>
<div style="left:183px;top:329px;width:15px;height:13px;background:#f0f0f0;border-left:1px solid #b0b0b0;border-right:1px solid #b0b0b0;"></div>
<div style="left:184px;top:336px;width:13px;height:1px;background:#c0c0c0;"></div>
<svg style="left:186px;top:330px" width="7" height="12" viewBox="0 0 7 12"><path d="M0.6 4.1 L3.5 0.9 L6.4 4.1 Z M0.6 8 L6.4 8 L3.5 11.2 Z" fill="#111"/></svg>
<svg style="left:158.6px;top:330.8px" width="5" height="10" viewBox="0 0 5 10"><path d="M0.2 2.7 L3 0.6 L3 9.2" stroke="#000" stroke-width="1.15" fill="none"/></svg>
<span class="t" style="left:163.25px;top:330px;font-size:12px;color:#000;transform:scaleX(1.0957);">0</span>
<div style="left:200px;top:328px;width:13px;height:13px;background:#fff;border:1px solid #333;"></div>
<div style="left:238px;top:327px;width:16px;height:15px;background:#ffffe1;"></div>
<div style="left:263px;top:327px;width:16px;height:15px;background:#000;"></div>
<svg style="left:50px;top:358px" width="90" height="18" viewBox="0 0 90 18">
<path d="M3.4 1.3 C4.2 6 5.5 10.5 7 13 C8 14.8 9.5 15.3 11.5 15.3 L73.5 15.3 C76 15.3 77.3 14 78.2 11.5 C79.5 8 80.8 4.5 82 1.3" fill="#fff" stroke="#1a1a1a" stroke-width="1.1"/></svg>
<div style="left:54px;top:359px;width:78px;height:1px;background:#fff;"></div>
<span class="t" style="left:63.75px;top:362px;font-size:11px;color:#000;transform:scaleX(0.9504);">Book Colors</span>
<div style="left:393px;top:59px;width:161px;height:314px;border:1px solid #dcdcdc;"></div>
<div style="left:399px;top:52px;width:116px;height:14px;background:#fff;"></div>
<span class="t" style="left:400.35px;top:55px;font-size:11px;color:#000;transform:scaleX(0.9528);">Price Level Color Bands</span>
<div style="left:403px;top:73px;width:90px;height:291px;border:1px solid #828790;background:#fff;"></div>
<div style="left:425px;top:74px;width:1px;height:19px;background:#e5e5e5;"></div>
<div style="left:452px;top:74px;width:1px;height:19px;background:#e5e5e5;"></div>
<div style="left:426px;top:76px;width:26px;height:16px;overflow:hidden;"><span class="t" style="left:-1.5px;top:5px;font-size:9px;transform:scaleX(0.9018)">BGD</span></div>
<span class="t" style="left:461.23px;top:81px;font-size:9px;color:#000;transform:scaleX(1.0361);">Color</span>
<div style="left:405px;top:93px;width:20px;height:12px;overflow:hidden;"><span class="t" style="left:2.8px;top:4px;font-size:12px;transform:scaleX(0.95)">1</span></div>
<div style="left:426px;top:93px;width:26px;height:15px;background:#ffff80;"></div>
<div style="left:453px;top:93px;width:38px;height:15px;background:#000;"></div>
<div style="left:405px;top:109px;width:20px;height:12px;overflow:hidden;"><span class="t" style="left:2.8px;top:4px;font-size:12px;transform:scaleX(0.95)">2</span></div>
<div style="left:426px;top:109px;width:26px;height:15px;background:#ff2020;"></div>
<div style="left:453px;top:109px;width:38px;height:15px;background:#000;"></div>
<div style="left:405px;top:125px;width:20px;height:12px;overflow:hidden;"><span class="t" style="left:2.8px;top:4px;font-size:12px;transform:scaleX(0.95)">3</span></div>
<div style="left:426px;top:125px;width:26px;height:15px;background:#0080ff;"></div>
<div style="left:453px;top:125px;width:38px;height:15px;background:#000;"></div>
<div style="left:405px;top:141px;width:20px;height:12px;overflow:hidden;"><span class="t" style="left:2.8px;top:4px;font-size:12px;transform:scaleX(0.95)">4</span></div>
<div style="left:426px;top:141px;width:26px;height:15px;background:#00c000;"></div>
<div style="left:453px;top:141px;width:38px;height:15px;background:#000;"></div>
<div style="left:405px;top:157px;width:20px;height:12px;overflow:hidden;"><span class="t" style="left:2.8px;top:4px;font-size:12px;transform:scaleX(0.95)">5</span></div>
<div style="left:426px;top:157px;width:26px;height:15px;background:#ff8000;"></div>
<div style="left:453px;top:157px;width:38px;height:15px;background:#000;"></div>
<div style="left:405px;top:173px;width:20px;height:12px;overflow:hidden;"><span class="t" style="left:2.8px;top:4px;font-size:12px;transform:scaleX(0.95)">6</span></div>
<div style="left:426px;top:173px;width:26px;height:15px;background:#c000c0;"></div>
<div style="left:453px;top:173px;width:38px;height:15px;background:#000;"></div>
<div style="left:405px;top:189px;width:20px;height:12px;overflow:hidden;"><span class="t" style="left:2.8px;top:4px;font-size:12px;transform:scaleX(0.95)">7</span></div>
<div style="left:426px;top:189px;width:26px;height:15px;background:#00c0c0;"></div>
<div style="left:453px;top:189px;width:38px;height:15px;background:#000;"></div>
<div style="left:405px;top:205px;width:20px;height:12px;overflow:hidden;"><span class="t" style="left:2.8px;top:4px;font-size:12px;transform:scaleX(0.95)">8</span></div>
<div style="left:426px;top:205px;width:26px;height:15px;background:#808080;"></div>
<div style="left:453px;top:205px;width:38px;height:15px;background:#000;"></div>
<div style="left:405px;top:221px;width:20px;height:12px;overflow:hidden;"><span class="t" style="left:2.8px;top:4px;font-size:12px;transform:scaleX(0.95)">9</span></div>
<div style="left:426px;top:221px;width:26px;height:15px;background:#804000;"></div>
<div style="left:453px;top:221px;width:38px;height:15px;background:#000;"></div>
<div style="left:405px;top:237px;width:20px;height:12px;overflow:hidden;"><span class="t" style="left:2.8px;top:4px;font-size:12px;transform:scaleX(0.95)">10</span></div>
<div style="left:426px;top:237px;width:26px;height:15px;background:#008080;"></div>
<div style="left:453px;top:237px;width:38px;height:15px;background:#000;"></div>
<div style="left:405px;top:253px;width:20px;height:12px;overflow:hidden;"><span class="t" style="left:2.8px;top:4px;font-size:12px;transform:scaleX(0.95)">11</span></div>
<div style="left:426px;top:253px;width:26px;height:15px;background:#800080;"></div>
<div style="left:453px;top:253px;width:38px;height:15px;background:#000;"></div>
<div style="left:404px;top:347px;width:88px;height:16px;background:#f0f0f0;"></div>
<div style="left:420px;top:347px;width:55px;height:16px;background:#cdcdcd;"></div>
<svg style="left:480px;top:350px" width="8" height="10" viewBox="0 0 8 10"><path d="M1.8 1 L6 5 L1.8 9" stroke="#4a4a4a" stroke-width="2" fill="none"/></svg>
<div style="left:499px;top:73px;width:45px;height:290px;border:1px solid #dcdcdc;background:#fff;"></div>
<div class="btn" style="left:510px;top:157px;width:23px;height:21px;"></div>
<svg style="left:517.2px;top:164.5px" width="8" height="8" viewBox="0 0 8 8"><path d="M0.4 4 L7.6 4 M4 0.5 L4 7.5" stroke="#000" stroke-width="1.1" fill="none"/></svg>
<div class="btn" style="left:510px;top:259px;width:23px;height:21px;"></div>
<div style="left:519px;top:270px;width:4px;height:1px;background:#111;"></div>
<div style="left:563px;top:60px;width:181px;height:313px;border:1px solid #dcdcdc;"></div>
<div style="left:570px;top:52px;width:98px;height:14px;background:#fff;"></div>
<span class="t" style="left:572.40px;top:55px;font-size:11px;color:#000;transform:scaleX(0.9683);">Axes Color Settings</span>
<div style="left:573px;top:73px;width:110px;height:291px;border:1px solid #828790;background:#fff;"></div>
<div style="left:612px;top:74px;width:1px;height:19px;background:#e5e5e5;"></div>
<div style="left:651px;top:74px;width:1px;height:19px;background:#e5e5e5;"></div>
<span class="t" style="left:585.80px;top:81px;font-size:9px;color:#000;transform:scaleX(0.9867);">Axe</span>
<span class="t" style="left:623.71px;top:81px;font-size:9px;color:#000;transform:scaleX(0.9205);">BGD</span>
<div style="left:652px;top:76px;width:30px;height:16px;overflow:hidden;"><span class="t" style="left:9.4px;top:5px;font-size:9px;transform:scaleX(0.9760)">Color</span></div>
<span class="t" style="left:576.72px;top:95px;font-size:12px;color:#000;transform:scaleX(0.8841);">MSCO</span>
<div style="left:613px;top:93px;width:38px;height:15px;background:#000;"></div>
<div style="left:652px;top:93px;width:31px;height:15px;background:#f0f000;"></div>
<div style="left:574px;top:109px;width:38px;height:16px;background:#f5f5f5;"></div>
<span class="t" style="left:576.68px;top:111px;font-size:12px;color:#000;transform:scaleX(0.9238);">LEHM</span>
<div style="left:613px;top:109px;width:38px;height:15px;background:#000;"></div>
<div style="left:652px;top:109px;width:31px;height:15px;background:#e00000;"></div>
<span class="t" style="left:576.73px;top:127px;font-size:12px;color:#000;transform:scaleX(0.8662);">BRMS</span>
<div style="left:613px;top:125px;width:38px;height:15px;background:#000;"></div>
<div style="left:652px;top:125px;width:31px;height:15px;background:#00d000;"></div>
<div style="left:574px;top:141px;width:38px;height:16px;background:#f5f5f5;"></div>
<span class="t" style="left:577.14px;top:143px;font-size:12px;color:#000;transform:scaleX(0.9271);">GETC</span>
<div style="left:613px;top:141px;width:38px;height:15px;background:#000;"></div>
<div style="left:652px;top:141px;width:31px;height:15px;background:#ee82ee;"></div>
<div style="left:575px;top:157px;width:36px;height:15px;border:1px dotted #000;"></div>
<span class="t" style="left:577.74px;top:159px;font-size:12px;font-weight:bold;color:#000;transform:scaleX(1.0526);">TIMB</span>
<div style="left:613px;top:157px;width:38px;height:15px;background:#000;"></div>
<div style="left:652px;top:157px;width:31px;height:15px;background:#00ffff;"></div>
<div style="left:574px;top:347px;width:108px;height:16px;background:#f0f0f0;"></div>
<div style="left:591px;top:347px;width:68px;height:16px;background:#cdcdcd;"></div>
<svg style="left:578px;top:350px" width="8" height="10" viewBox="0 0 8 10"><path d="M6.2 1 L2 5 L6.2 9" stroke="#4a4a4a" stroke-width="2" fill="none"/></svg>
<svg style="left:669px;top:350px" width="8" height="10" viewBox="0 0 8 10"><path d="M1.8 1 L6 5 L1.8 9" stroke="#4a4a4a" stroke-width="2" fill="none"/></svg>
<div style="left:689px;top:73px;width:45px;height:290px;border:1px solid #dcdcdc;background:#fff;"></div>
<div style="left:700px;top:131px;width:23px;height:21px;background:#e1e1e1;border:2px solid #0078d7;"></div>
<svg style="left:707.2px;top:138.5px" width="8" height="8" viewBox="0 0 8 8"><path d="M0.4 4 L7.6 4 M4 0.5 L4 7.5" stroke="#000" stroke-width="1.1" fill="none"/></svg>
<div class="btn" style="left:700px;top:207px;width:23px;height:21px;"></div>
<div style="left:709px;top:218px;width:4px;height:1px;background:#111;"></div>
<div class="btn" style="left:700px;top:283px;width:23px;height:21px;"></div>
<span class="t" style="left:707.42px;top:288px;font-size:12px;color:#000;transform:scaleX(1.1273);">x</span>
<div style="left:53px;top:387px;width:291px;height:73px;border:1px solid #dcdcdc;"></div>
<div style="left:59px;top:380px;width:73px;height:14px;background:#fff;"></div>
<span class="t" style="left:61.40px;top:382px;font-size:11px;color:#000;transform:scaleX(0.9926);">Other Options</span>
<span class="t" style="left:62.54px;top:417px;font-size:11px;color:#000;transform:scaleX(0.9147);">Grid Line Color</span>
<div class="sw" style="left:149px;top:410px;width:32px;height:20px;background:#d2691e;"></div>
<span class="t" style="left:207.61px;top:417px;font-size:11px;color:#000;transform:scaleX(0.9886);">Header</span>
<span class="t" style="left:183.04px;top:443px;font-size:11px;color:#000;transform:scaleX(0.9649);">Background</span>
<span class="t" style="left:266.54px;top:397px;font-size:11px;color:#000;transform:scaleX(0.9574);">Back</span>
<span class="t" style="left:307.43px;top:397px;font-size:11px;color:#000;transform:scaleX(1.0785);">Text</span>
<div class="sw" style="left:263px;top:410px;width:32px;height:20px;background:#d3d3d3;"></div>
<div class="sw" style="left:303px;top:410px;width:32px;height:20px;background:#000;"></div>
<div class="sw" style="left:263px;top:436px;width:32px;height:20px;background:#808080;"></div>
<div style="left:353px;top:387px;width:181px;height:73px;border:1px solid #dcdcdc;"></div>
<div style="left:359px;top:380px;width:71px;height:14px;background:#fff;"></div>
<span class="t" style="left:360.73px;top:382px;font-size:11px;color:#000;transform:scaleX(0.9658);">Level1 Colors</span>
<span class="t" style="left:436.24px;top:397px;font-size:11px;color:#000;transform:scaleX(0.9574);">Back</span>
<span class="t" style="left:477.32px;top:397px;font-size:11px;color:#000;transform:scaleX(1.1241);">Text</span>
<span class="t" style="left:361.79px;top:417px;font-size:11px;color:#000;transform:scaleX(0.9444);">Up Tick</span>
<span class="t" style="left:361.54px;top:443px;font-size:11px;color:#000;transform:scaleX(0.9648);">Down Tick</span>
<div style="left:433px;top:410px;width:32px;height:20px;background:#008000;border:1px solid #e02020;"></div>
<div class="sw" style="left:473px;top:410px;width:32px;height:20px;background:#000;"></div>
<div style="left:433px;top:436px;width:32px;height:20px;background:#ff0000;border:1px solid #ff0000;"></div>
<div class="sw" style="left:473px;top:436px;width:32px;height:20px;background:#000;"></div>
<div style="left:543px;top:387px;width:201px;height:73px;border:1px solid #dcdcdc;"></div>
<div style="left:549px;top:380px;width:91px;height:14px;background:#fff;"></div>
<span class="t" style="left:551.01px;top:382px;font-size:11px;color:#000;transform:scaleX(0.9771);">Order Highlighting</span>
<div style="left:553px;top:404px;width:13px;height:13px;background:#fff;border:1px solid #333;"></div>
<span class="t" style="left:569.21px;top:406px;font-size:11px;color:#000;transform:scaleX(0.9905);">Highlight Accepted Orders</span>
<span class="t" style="left:626.44px;top:423px;font-size:11px;color:#000;transform:scaleX(0.9574);">Back</span>
<span class="t" style="left:667.23px;top:423px;font-size:11px;color:#000;transform:scaleX(1.0734);">Text</span>
<span class="t" style="left:552.01px;top:443px;font-size:11px;color:#000;transform:scaleX(0.9744);">Order Color</span>
<div class="sw" style="left:623px;top:436px;width:32px;height:20px;background:#000;"></div>
<div style="left:663px;top:436px;width:32px;height:20px;background:#fff;border:1px solid #fff;border-right-color:#a0a0a0;border-bottom-color:#a0a0a0;"></div>
<div style="left:31px;top:481px;width:731px;height:70px;border:1px solid #dcdcdc;"></div>
<div class="btn" style="left:372px;top:492px;width:114px;height:21px;"></div>
<span class="t" style="left:396.20px;top:498px;font-size:11px;color:#000;transform:scaleX(1.0041);">Load Default</span>
<div class="btn" style="left:500px;top:492px;width:113px;height:21px;"></div>
<span class="t" style="left:517.41px;top:498px;font-size:11px;color:#000;transform:scaleX(0.9805);">Save as Default</span>
<div class="btn" style="left:627px;top:492px;width:114px;height:21px;"></div>
<span class="t" style="left:669.80px;top:498px;font-size:11px;color:#000;transform:scaleX(0.9782);">Apply</span>
<div class="btn" style="left:500px;top:527px;width:113px;height:21px;"></div>
<span class="t" style="left:548.03px;top:533px;font-size:11px;color:#000;transform:scaleX(0.9443);">OK</span>
<div class="btn" style="left:627px;top:527px;width:114px;height:21px;"></div>
<span class="t" style="left:667.42px;top:533px;font-size:11px;color:#000;transform:scaleX(0.9697);">Cancel</span>
<div style="left:149px;top:136px;width:316px;height:247px;background:#f0f0f0;border:1px solid #6a6a6a;"></div>
<div style="left:150px;top:137px;width:314px;height:245px;border:1px solid #fff;"></div>
<div style="left:150px;top:137px;width:314px;height:30px;background:#fff;"></div>
<svg style="left:158px;top:144px" width="16" height="14" viewBox="0 0 16 14">
<defs><linearGradient id="g1" x1="0" y1="0" x2="0.4" y2="1"><stop offset="0" stop-color="#4a86c8"/><stop offset="1" stop-color="#3fa55a"/></linearGradient></defs>
<rect x="0.5" y="0.5" width="14.5" height="12.2" fill="#f4f4f4"/>
<path d="M0.3 0.6 L14.9 0.6 L14.9 12.6 L0.3 12.6" fill="none" stroke="#6b737c" stroke-width="1.1"/>
<rect x="1.6" y="3" width="5.6" height="7.4" fill="url(#g1)"/>
<rect x="12" y="3" width="1" height="2.2" fill="#3a6fc0"/><rect x="12" y="5.2" width="1" height="1.8" fill="#4aa860"/>
<rect x="8" y="9" width="3" height="1.4" fill="#b8b8b8"/>
</svg>
<span class="t" style="left:177.41px;top:146px;font-size:12px;color:#000;transform:scaleX(0.9722);">Color Selector</span>
<svg style="left:444px;top:146px" width="11" height="11" viewBox="0 0 11 11"><path d="M0.2 0.2 L10 10 M10 0.2 L0.2 10" stroke="#000" stroke-width="1.1" fill="none"/></svg>
<div style="left:152px;top:183px;width:309px;height:166px;background:#fff;border:1px solid #d4d4d4;"></div>
<svg style="left:150px;top:166px" width="180" height="20" viewBox="0 0 180 20">
<path d="M60.5 17 C63 12 63.5 4.7 67.5 4.7 L98 4.7 C102 4.7 102.5 12 104.5 17" fill="#f0f0f0" stroke="#1a1a1a" stroke-width="1.1"/>
<path d="M106.5 17 C109 12 109.5 4.7 113.5 4.7 L157 4.7 C161.5 4.7 162 12 164.8 17" fill="#f0f0f0" stroke="#1a1a1a" stroke-width="1.1"/>
<path d="M2.5 18.5 C5 12 5.5 3.7 10.5 3.7 L52 3.7 C56.5 3.7 57.3 12 60 18.5 Z" fill="#fff" stroke="none"/>
<path d="M2.5 18.5 C5 12 5.5 3.7 10.5 3.7 L52 3.7 C56.5 3.7 57.3 12 60 18.5" fill="none" stroke="#111" stroke-width="1.3"/>
</svg>
<span class="t" style="left:162.36px;top:172px;font-size:11px;color:#000;transform:scaleX(1.0382);">Palette</span>
<span class="t" style="left:222.20px;top:172px;font-size:11px;color:#000;transform:scaleX(0.9455);">Web</span>
<span class="t" style="left:267.11px;top:172px;font-size:11px;color:#000;transform:scaleX(0.9796);">Custom</span>
<div style="left:166px;top:194px;width:282px;height:142px;border:1px solid #828790;background:#fff;"></div>
<div style="left:167px;top:195px;width:20px;height:20px;background:#ffc0c0;"></div>
<div style="left:187px;top:195px;width:20px;height:20px;background:#efd0c0;"></div>
<div style="left:207px;top:195px;width:20px;height:20px;background:#e0e0c0;"></div>
<div style="left:227px;top:195px;width:20px;height:20px;background:#d0efc0;"></div>
<div style="left:247px;top:195px;width:20px;height:20px;background:#c0ffc0;"></div>
<div style="left:267px;top:195px;width:20px;height:20px;background:#c0efd0;"></div>
<div style="left:287px;top:195px;width:20px;height:20px;background:#c0e0e0;"></div>
<div style="left:307px;top:195px;width:20px;height:20px;background:#c0d0ef;"></div>
<div style="left:327px;top:195px;width:20px;height:20px;background:#c0c0ff;"></div>
<div style="left:347px;top:195px;width:20px;height:20px;background:#d0c0ef;"></div>
<div style="left:367px;top:195px;width:20px;height:20px;background:#e0c0e0;"></div>
<div style="left:387px;top:195px;width:20px;height:20px;background:#efc0d0;"></div>
<div style="left:407px;top:195px;width:20px;height:20px;background:#ffc0c0;"></div>
<div style="left:427px;top:195px;width:20px;height:20px;background:#ffffff;"></div>
<div style="left:167px;top:215px;width:20px;height:20px;background:#ff8080;"></div>
<div style="left:187px;top:215px;width:20px;height:20px;background:#f4b580;"></div>
<div style="left:207px;top:215px;width:20px;height:20px;background:#eaea80;"></div>
<div style="left:227px;top:215px;width:20px;height:20px;background:#b5f480;"></div>
<div style="left:247px;top:215px;width:20px;height:20px;background:#80ff80;"></div>
<div style="left:267px;top:215px;width:20px;height:20px;background:#80f4b5;"></div>
<div style="left:287px;top:215px;width:20px;height:20px;background:#80eaea;"></div>
<div style="left:307px;top:215px;width:20px;height:20px;background:#80b5f4;"></div>
<div style="left:327px;top:215px;width:20px;height:20px;background:#8080ff;"></div>
<div style="left:347px;top:215px;width:20px;height:20px;background:#b580f4;"></div>
<div style="left:367px;top:215px;width:20px;height:20px;background:#ea80ea;"></div>
<div style="left:387px;top:215px;width:20px;height:20px;background:#f480b5;"></div>
<div style="left:407px;top:215px;width:20px;height:20px;background:#ff8080;"></div>
<div style="left:427px;top:215px;width:20px;height:20px;background:#d4d4d4;"></div>
<div style="left:167px;top:235px;width:20px;height:20px;background:#ff4040;"></div>
<div style="left:187px;top:235px;width:20px;height:20px;background:#fa9a40;"></div>
<div style="left:207px;top:235px;width:20px;height:20px;background:#f4f440;"></div>
<div style="left:227px;top:235px;width:20px;height:20px;background:#9afa40;"></div>
<div style="left:247px;top:235px;width:20px;height:20px;background:#40ff40;"></div>
<div style="left:267px;top:235px;width:20px;height:20px;background:#40fa9a;"></div>
<div style="left:287px;top:235px;width:20px;height:20px;background:#40f4f4;"></div>
<div style="left:307px;top:235px;width:20px;height:20px;background:#409afa;"></div>
<div style="left:327px;top:235px;width:20px;height:20px;background:#4040ff;"></div>
<div style="left:347px;top:235px;width:20px;height:20px;background:#9a40fa;"></div>
<div style="left:367px;top:235px;width:20px;height:20px;background:#f440f4;"></div>
<div style="left:387px;top:235px;width:20px;height:20px;background:#fa409a;"></div>
<div style="left:407px;top:235px;width:20px;height:20px;background:#ff4040;"></div>
<div style="left:427px;top:235px;width:20px;height:20px;background:#aaaaaa;"></div>
<div style="left:167px;top:255px;width:20px;height:20px;background:#ff0000;"></div>
<div style="left:187px;top:255px;width:20px;height:20px;background:#ff8000;"></div>
<div style="left:207px;top:255px;width:20px;height:20px;background:#ffff00;"></div>
<div style="left:227px;top:255px;width:20px;height:20px;background:#80ff00;"></div>
<div style="left:247px;top:255px;width:20px;height:20px;background:#00ff00;"></div>
<div style="left:267px;top:255px;width:20px;height:20px;background:#00ff80;"></div>
<div style="left:287px;top:255px;width:20px;height:20px;background:#00ffff;"></div>
<div style="left:307px;top:255px;width:20px;height:20px;background:#0080ff;"></div>
<div style="left:327px;top:255px;width:20px;height:20px;background:#0000ff;"></div>
<div style="left:347px;top:255px;width:20px;height:20px;background:#8000ff;"></div>
<div style="left:367px;top:255px;width:20px;height:20px;background:#ff00ff;"></div>
<div style="left:387px;top:255px;width:20px;height:20px;background:#ff0080;"></div>
<div style="left:407px;top:255px;width:20px;height:20px;background:#ff0000;"></div>
<div style="left:427px;top:255px;width:20px;height:20px;background:#808080;"></div>
<div style="left:167px;top:275px;width:20px;height:20px;background:#c00000;"></div>
<div style="left:187px;top:275px;width:20px;height:20px;background:#c06000;"></div>
<div style="left:207px;top:275px;width:20px;height:20px;background:#c0c000;"></div>
<div style="left:227px;top:275px;width:20px;height:20px;background:#60c000;"></div>
<div style="left:247px;top:275px;width:20px;height:20px;background:#00c000;"></div>
<div style="left:267px;top:275px;width:20px;height:20px;background:#00c060;"></div>
<div style="left:287px;top:275px;width:20px;height:20px;background:#00c0c0;"></div>
<div style="left:307px;top:275px;width:20px;height:20px;background:#0060c0;"></div>
<div style="left:327px;top:275px;width:20px;height:20px;background:#0000c0;"></div>
<div style="left:347px;top:275px;width:20px;height:20px;background:#6000c0;"></div>
<div style="left:367px;top:275px;width:20px;height:20px;background:#c000c0;"></div>
<div style="left:387px;top:275px;width:20px;height:20px;background:#c00060;"></div>
<div style="left:407px;top:275px;width:20px;height:20px;background:#c00000;"></div>
<div style="left:427px;top:275px;width:20px;height:20px;background:#555555;"></div>
<div style="left:167px;top:295px;width:20px;height:20px;background:#800000;"></div>
<div style="left:187px;top:295px;width:20px;height:20px;background:#804000;"></div>
<div style="left:207px;top:295px;width:20px;height:20px;background:#808000;"></div>
<div style="left:227px;top:295px;width:20px;height:20px;background:#408000;"></div>
<div style="left:247px;top:295px;width:20px;height:20px;background:#008000;"></div>
<div style="left:267px;top:295px;width:20px;height:20px;background:#008040;"></div>
<div style="left:287px;top:295px;width:20px;height:20px;background:#008080;"></div>
<div style="left:307px;top:295px;width:20px;height:20px;background:#004080;"></div>
<div style="left:327px;top:295px;width:20px;height:20px;background:#000080;"></div>
<div style="left:347px;top:295px;width:20px;height:20px;background:#400080;"></div>
<div style="left:367px;top:295px;width:20px;height:20px;background:#800080;"></div>
<div style="left:387px;top:295px;width:20px;height:20px;background:#800040;"></div>
<div style="left:407px;top:295px;width:20px;height:20px;background:#800000;"></div>
<div style="left:427px;top:295px;width:20px;height:20px;background:#2a2a2a;"></div>
<div style="left:167px;top:315px;width:20px;height:20px;background:#400000;"></div>
<div style="left:187px;top:315px;width:20px;height:20px;background:#402000;"></div>
<div style="left:207px;top:315px;width:20px;height:20px;background:#404000;"></div>
<div style="left:227px;top:315px;width:20px;height:20px;background:#204000;"></div>
<div style="left:247px;top:315px;width:20px;height:20px;background:#004000;"></div>
<div style="left:267px;top:315px;width:20px;height:20px;background:#004020;"></div>
<div style="left:287px;top:315px;width:20px;height:20px;background:#004040;"></div>
<div style="left:307px;top:315px;width:20px;height:20px;background:#002040;"></div>
<div style="left:327px;top:315px;width:20px;height:20px;background:#000040;"></div>
<div style="left:347px;top:315px;width:20px;height:20px;background:#200040;"></div>
<div style="left:367px;top:315px;width:20px;height:20px;background:#400040;"></div>
<div style="left:387px;top:315px;width:20px;height:20px;background:#400020;"></div>
<div style="left:407px;top:315px;width:20px;height:20px;background:#400000;"></div>
<div style="left:427px;top:315px;width:20px;height:20px;background:#000000;"></div>
<div style="left:266px;top:194px;width:22px;height:22px;border:1px solid #ff0000;"></div>
<div style="left:177px;top:354px;width:101px;height:25px;background:#e1e1e1;border:1px solid #e8202a;"></div>
<div style="left:178px;top:355px;width:99px;height:23px;border:2px solid #0078d7;"></div>
<span class="t" style="left:218.93px;top:362px;font-size:11px;color:#000;transform:scaleX(0.9377);">OK</span>
<div style="left:287px;top:354px;width:40px;height:25px;background:#008000;border:1px solid;border-color:#c8c8c8 #7a7a7a #7a7a7a #c8c8c8;"></div>
<div class="btn" style="left:338px;top:355px;width:99px;height:23px;"></div>
<span class="t" style="left:370.32px;top:362px;font-size:11px;color:#000;transform:scaleX(0.9576);">Cancel</span>
</div></body></html>
